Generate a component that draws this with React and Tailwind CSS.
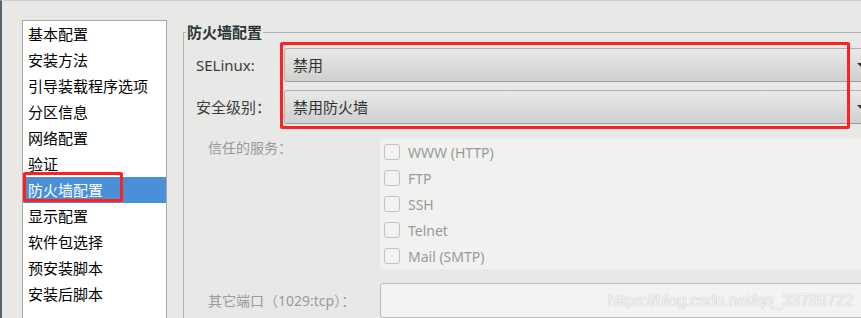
import React from 'react';

const navItems = [
  '基本配置',
  '安装方法',
  '引导装载程序选项',
  '分区信息',
  '网络配置',
  '验证',
  '防火墙配置',
  '显示配置',
  '软件包选择',
  '预安装脚本',
  '安装后脚本',
];

const services = ['WWW (HTTP)', 'FTP', 'SSH', 'Telnet', 'Mail (SMTP)'];

const font = { fontFamily: '"Noto Sans", "Noto Sans CJK SC", sans-serif' };

const Combo = ({ value }) => (
  <div className="relative flex-1 h-[34px] rounded-[3px] border border-[#b2b2b2] border-b-[#9c9c9c] bg-gradient-to-b from-[#e9e9e7] to-[#d0d0ce] flex items-center pl-[8px] text-[15px] text-[#2e3436]">
    {value}
    <span className="absolute right-[7px] top-[14px] w-0 h-0 border-l-[4px] border-r-[4px] border-t-[4px] border-l-transparent border-r-transparent border-t-[#2e3436]"></span>
  </div>
);

const App = () => {
  return (
    <div
      className="relative w-[861px] h-[318px] overflow-hidden bg-[#e8e8e7] border-l-2 border-l-[#56636f] border-t border-t-[#cfcfcf] flex"
      style={font}
    >
      {/* left nav */}
      <div className="pl-[20px] pt-[19px] shrink-0">
        <div className="w-[145px] h-[320px] bg-white border border-[#a9a9a9]">
          {navItems.map((item, i) => (
            <div
              key={item}
              className={`h-[26px] flex items-center pl-[5px] text-[15px] leading-none ${
                i === 6 ? 'bg-[#4a90d9] text-white' : 'text-black'
              }`}
            >
              {item}
            </div>
          ))}
        </div>
      </div>

      {/* firewall frame */}
      <fieldset className="ml-[16px] mt-[21px] w-[700px] shrink-0 border-l border-t border-[#b4b4b4] border-r-0 border-b-0 p-0 m-0">
        <legend className="ml-[2px] px-[1px] text-[15px] leading-[20px] font-bold text-[#2e3436]">
          防火墙配置
        </legend>

        <div className="pt-[6px] pl-[12px] pr-[10px] flex flex-col gap-[8px]">
          <div className="flex items-center">
            <div className="w-[88px] text-[15px] text-[#3d3d3d]">SELinux:</div>
            <Combo value="禁用" />
          </div>
          <div className="flex items-center">
            <div className="w-[88px] text-[15px] text-[#3d3d3d]">安全级别：</div>
            <Combo value="禁用防火墙" />
          </div>
        </div>

        <div className="mt-[15px] pl-[24px] flex">
          <div className="w-[172px] text-[14px] leading-[18px] text-[#9a9a9a]">信任的服务：</div>
          <div className="flex-1 bg-[#f1f1f0] pl-[4px]">
            {services.map((s) => (
              <div key={s} className="h-[26px] flex items-center gap-[8px]">
                <span className="w-[16px] h-[16px] rounded-[3px] border border-[#c2c2c2] bg-[#f2f2f1]"></span>
                <span className="text-[14px] text-[#9a9a9a]">{s}</span>
              </div>
            ))}
          </div>
        </div>

        <div className="mt-[14px] pl-[24px] flex items-center">
          <div className="w-[172px] text-[14px] text-[#9a9a9a]">其它端口（1029:tcp）：</div>
          <div className="flex-1 h-[35px] rounded-[3px] border border-[#bcbcbc] bg-[#f3f3f2]"></div>
        </div>
      </fieldset>

      {/* annotation boxes */}
      <div className="absolute left-[21px] top-[171px] w-[100px] h-[30px] border-[3px] border-[#ff2020] rounded-[2px]"></div>
      <div className="absolute left-[278px] top-[41px] w-[570px] h-[87px] border-[3px] border-[#ff2020] rounded-[2px]"></div>

      {/* watermark */}
      <div
        className="absolute left-[606px] top-[288px] text-[16px] text-[#f7f7f7] [text-shadow:0_0_1px_#9a9a9a]"
        style={{ fontFamily: '"Liberation Sans", Arial, sans-serif' }}
      >
        https://blog.csdn.net/qq_33789722
      </div>
    </div>
  );
};

export default App;
